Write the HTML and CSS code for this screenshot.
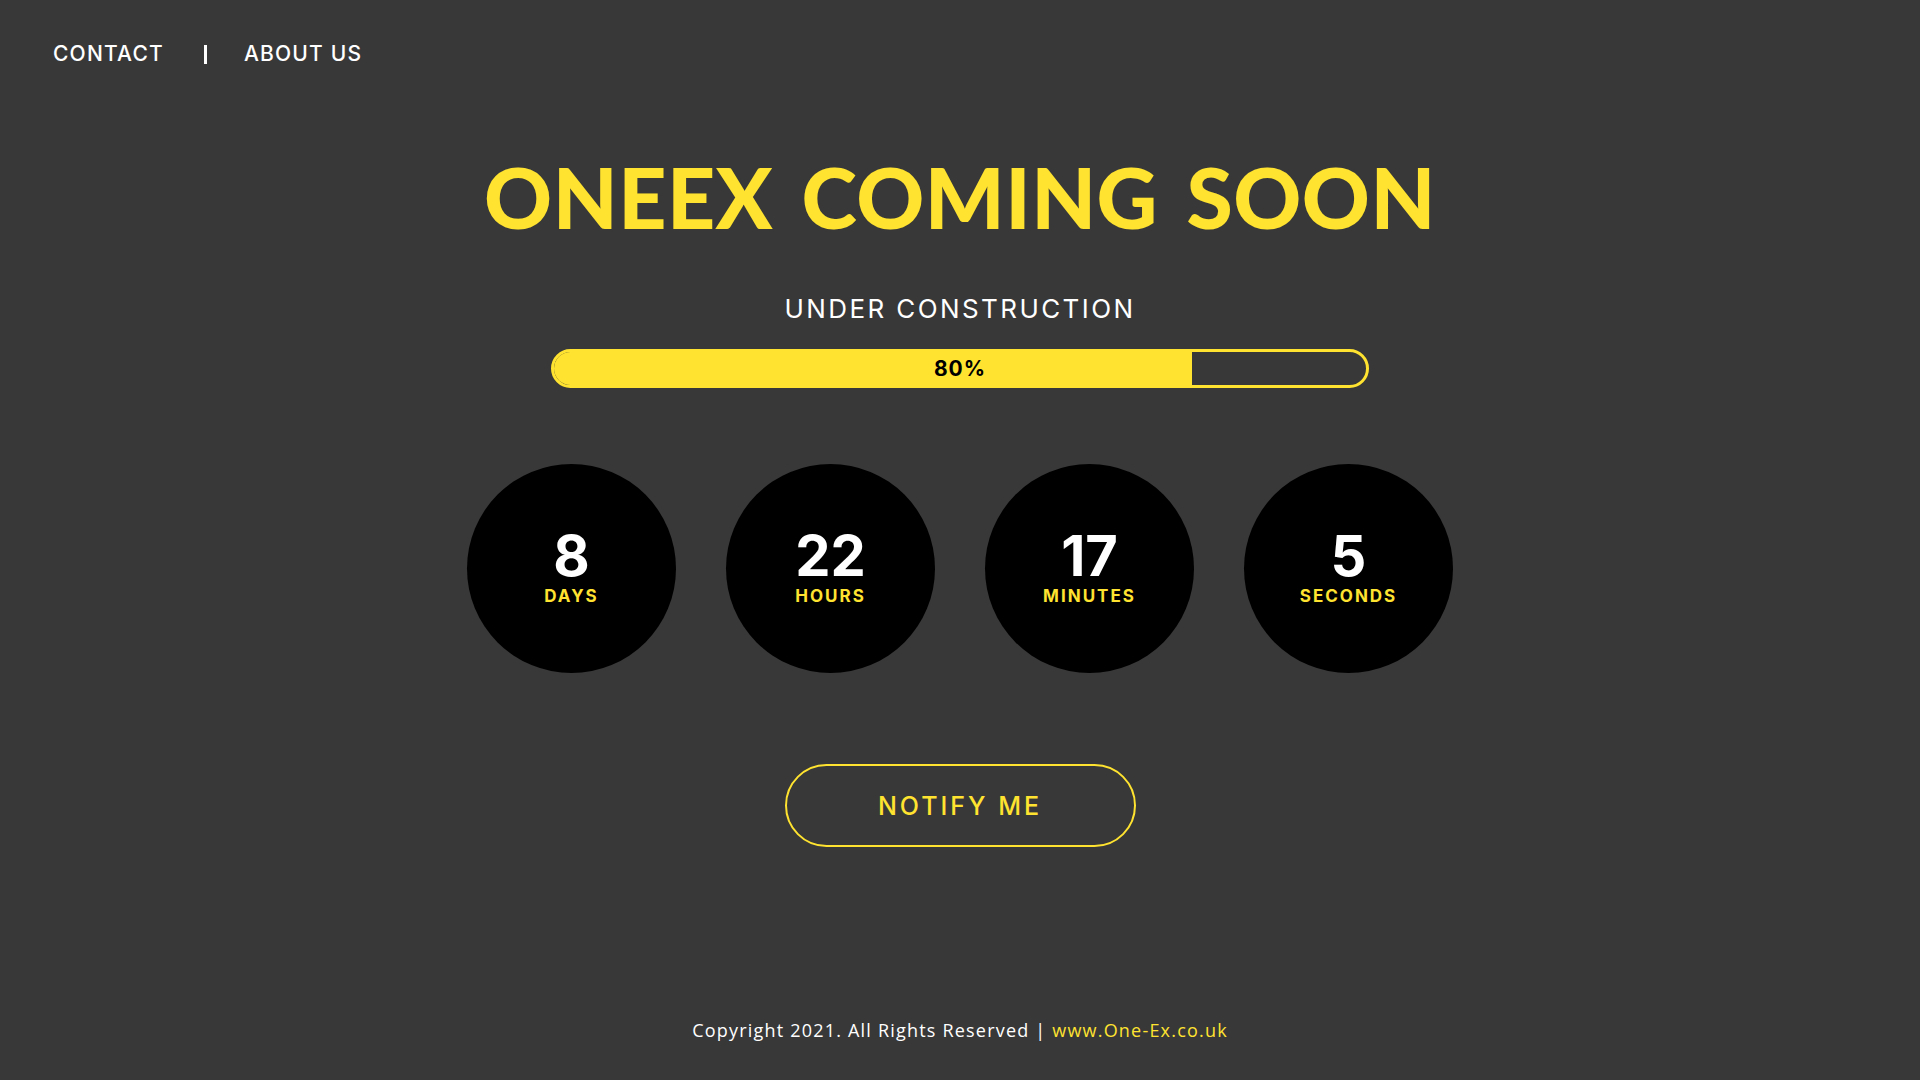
FILE: index.html
```html
<!DOCTYPE html>
<html lang="en">
<head>
<meta charset="utf-8">
<title>OneEx Coming Soon</title>
<link rel="stylesheet" href="styles.css">
</head>
<body>
<div class="page">
  <nav class="nav">
    <a class="nav-link" href="#">CONTACT</a>
    <span class="nav-sep"></span>
    <a class="nav-link" href="#">ABOUT US</a>
  </nav>
  <main class="main">
    <h1 class="title">ONEEX COMING SOON</h1>
    <h2 class="subtitle">UNDER CONSTRUCTION</h2>
    <div class="progress">
      <div class="progress-fill" style="width: 78.6%"></div>
      <span class="progress-label">80%</span>
    </div>
    <div class="countdown">
      <div class="circle"><span class="num">8</span><span class="unit">DAYS</span></div>
      <div class="circle"><span class="num">22</span><span class="unit">HOURS</span></div>
      <div class="circle"><span class="num">17</span><span class="unit">MINUTES</span></div>
      <div class="circle"><span class="num">5</span><span class="unit">SECONDS</span></div>
    </div>
    <a class="notify" href="#">NOTIFY ME</a>
  </main>
  <footer class="footer">Copyright 2021. All Rights Reserved | <span class="site">www.One-Ex.co.uk</span></footer>
</div>
</body>
</html>
```
FILE: styles.css
```css
html, body {
  margin: 0;
  padding: 0;
  background: #383838;
}
body {
  font-family: "Inter", "Noto Sans", sans-serif;
  color: #ffffff;
}
.page {
  width: 1920px;
  height: 1080px;
  display: flex;
  flex-direction: column;
  overflow: hidden;
}
.nav {
  display: flex;
  align-items: center;
  padding: 43px 0 0 53px;
  height: 22px;
}
.nav-link {
  color: #ffffff;
  text-decoration: none;
  font-size: 21px;
  font-weight: 500;
  letter-spacing: 1.2px;
  line-height: 22px;
}
.nav-sep {
  display: block;
  width: 3px;
  height: 19px;
  background: #ffffff;
  margin: 0 37px 0 40px;
}
.main {
  display: flex;
  flex-direction: column;
  align-items: center;
}
.title {
  margin: 90px 0 0 0;
  font-family: "Lato", sans-serif;
  font-weight: 900;
  font-size: 84px;
  line-height: 84px;
  letter-spacing: 0.5px;
  word-spacing: 8px;
  color: #ffe330;
}
.subtitle {
  margin: 57px 0 0 0;
  font-weight: 400;
  font-size: 26px;
  line-height: 26px;
  letter-spacing: 2.4px;
  color: #ffffff;
}
.progress {
  position: relative;
  margin-top: 27px;
  width: 818px;
  height: 39px;
  box-sizing: border-box;
  border: 3px solid #ffe330;
  border-radius: 20px;
  overflow: hidden;
}
.progress-fill {
  height: 100%;
  background: #ffe330;
}
.progress-label {
  position: absolute;
  left: 0;
  right: 0;
  top: 0;
  bottom: 0;
  display: flex;
  align-items: center;
  justify-content: center;
  font-weight: 700;
  font-size: 21px;
  letter-spacing: 1px;
  color: #000000;
}
.countdown {
  display: flex;
  gap: 50px;
  margin-top: 76px;
}
.circle {
  width: 209px;
  height: 209px;
  border-radius: 50%;
  background: #000000;
  display: flex;
  flex-direction: column;
  align-items: center;
  justify-content: center;
}
.num {
  font-weight: 700;
  font-size: 56px;
  line-height: 48px;
  color: #ffffff;
}
.unit {
  margin-top: 6px;
  font-weight: 700;
  font-size: 17px;
  line-height: 20px;
  letter-spacing: 2px;
  color: #ffe330;
}
.notify {
  margin-top: 91px;
  width: 351px;
  height: 83px;
  box-sizing: border-box;
  border: 2px solid #ffe330;
  border-radius: 42px;
  display: flex;
  align-items: center;
  justify-content: center;
  color: #ffe330;
  text-decoration: none;
  font-weight: 500;
  font-size: 25px;
  letter-spacing: 3px;
}
.footer {
  margin-top: auto;
  margin-bottom: 38px;
  text-align: center;
  font-family: "Open Sans", sans-serif;
  font-size: 18px;
  letter-spacing: 1.2px;
  color: #ffffff;
}
.site {
  color: #ffe330;
}
```
